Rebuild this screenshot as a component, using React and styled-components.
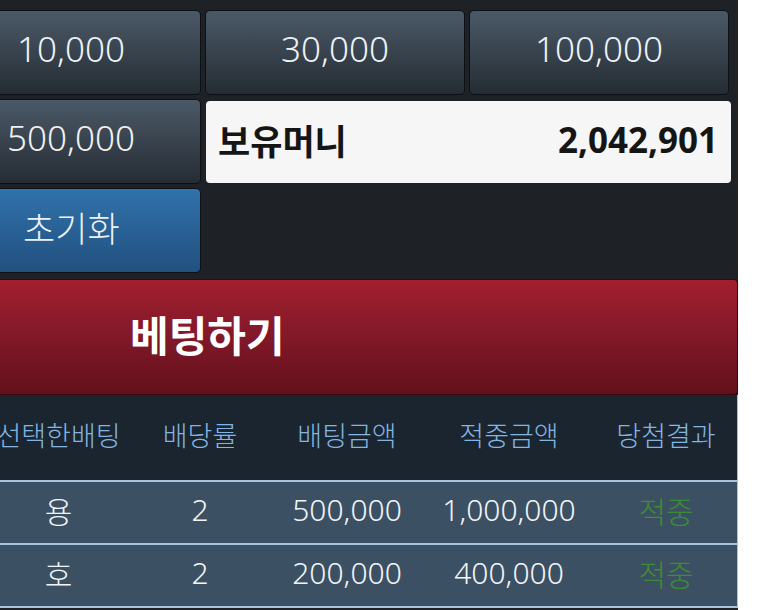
import React from 'react';
import styled, { createGlobalStyle } from 'styled-components';

const GlobalStyle = createGlobalStyle`
  body {
    margin: 0;
    background: #ffffff;
    font-family: 'Noto Sans', 'Noto Sans CJK KR', sans-serif;
  }
`;

const Panel = styled.div`
  width: 738px;
  height: 610px;
  background: #1e2125;
  overflow: hidden;
`;

const ChipGrid = styled.div`
  display: grid;
  grid-template-columns: repeat(3, 260px);
  grid-auto-rows: 85px;
  gap: 4px;
  padding-top: 10px;
  margin-left: -59px;
`;

const Chip = styled.button`
  display: flex;
  align-items: center;
  justify-content: ${p => (p.$blue ? 'flex-start' : 'center')};
  padding: 0 0 8px ${p => (p.$blue ? '81px' : '0')};
  border: 1px solid #0e1114;
  border-radius: 5px;
  background: ${p => p.$blue
    ? 'linear-gradient(to bottom, #3072ab 0%, #21507f 100%)'
    : 'linear-gradient(to bottom, #4b5967 0%, #252c33 100%)'};
  color: #eef1f4;
  font-family: inherit;
  font-size: 35px;
  font-weight: 300;
`;

const Money = styled.div`
  grid-column: span 2;
  display: flex;
  align-items: center;
  justify-content: space-between;
  margin: 2px -2px 1px 1px;
  padding: 0 13px 6px 12px;
  background: #f6f6f6;
  border-radius: 4px;
  color: #151515;
  font-size: 35px;
  font-weight: 700;
`;

const BetButton = styled.button`
  display: flex;
  align-items: center;
  width: calc(100% + 59px);
  height: 116px;
  margin: 6px 0 0 -59px;
  padding: 0 0 8px 188px;
  border: 1px solid #3a070c;
  border-radius: 4px;
  background: linear-gradient(to bottom, #a21f2d 0%, #84192a 45%, #63101a 100%);
  color: #ffffff;
  font-family: inherit;
  font-size: 42px;
  font-weight: 700;
`;

const Table = styled.div`
  margin-left: -12px;
  width: 750px;
`;

const Row = styled.div`
  display: grid;
  grid-template-columns: 141px 142px 152px 172px 142px;
  height: ${p => (p.$head ? '87px' : '63px')};
  padding-bottom: 6px;
  box-sizing: border-box;
  align-items: center;
  background: ${p => (p.$head ? '#1b2530' : '#3c5063')};
  border-bottom: 2px solid #a7c4dc;
  border-right: 1px solid #a7c4dc;
  color: ${p => (p.$head ? '#82b5e2' : '#f2f4f6')};
  font-size: ${p => (p.$head ? '27px' : '30px')};
  font-weight: 300;
`;

const Cell = styled.div`
  text-align: center;
  white-space: nowrap;
  color: ${p => (p.$hit ? '#3c8b36' : 'inherit')};
`;

const bets = [
  { pick: '용', rate: '2', amount: '500,000', win: '1,000,000', result: '적중' },
  { pick: '호', rate: '2', amount: '200,000', win: '400,000', result: '적중' },
];

export default function App() {
  return (
    <>
      <GlobalStyle />
      <Panel>
        <ChipGrid>
          <Chip>10,000</Chip>
          <Chip>30,000</Chip>
          <Chip>100,000</Chip>
          <Chip>500,000</Chip>
          <Money>
            <span>보유머니</span>
            <span>2,042,901</span>
          </Money>
          <Chip $blue>초기화</Chip>
        </ChipGrid>
        <BetButton>베팅하기</BetButton>
        <Table>
          <Row $head>
            <Cell>선택한배팅</Cell>
            <Cell>배당률</Cell>
            <Cell>배팅금액</Cell>
            <Cell>적중금액</Cell>
            <Cell>당첨결과</Cell>
          </Row>
          {bets.map(b => (
            <Row key={b.pick}>
              <Cell>{b.pick}</Cell>
              <Cell>{b.rate}</Cell>
              <Cell>{b.amount}</Cell>
              <Cell>{b.win}</Cell>
              <Cell $hit>{b.result}</Cell>
            </Row>
          ))}
        </Table>
      </Panel>
    </>
  );
}
